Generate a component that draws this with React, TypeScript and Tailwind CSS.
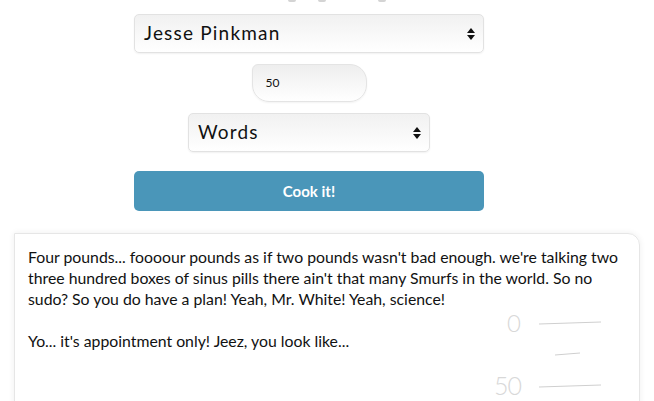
import React from 'react';

const Arrows = () => (
  <svg width="8" height="12" viewBox="0 0 8 12" className="shrink-0">
    <path d="M4 0 L8 5 L0 5 Z" fill="#111" />
    <path d="M0 7 L8 7 L4 12 Z" fill="#111" />
  </svg>
);

const FakeSelect = ({ label, className }: { label: string; className: string }) => (
  <div
    className={`flex items-center justify-between h-[39px] rounded-[5px] border border-[#e2e2e2] bg-gradient-to-b from-[#f1f1f1] to-white shadow-[0_1px_2px_rgba(0,0,0,0.06)] pl-[9px] pr-[8px] ${className}`}
  >
    <span className="text-[19px] text-[#111] tracking-[1.2px]">{label}</span>
    <Arrows />
  </div>
);

export default function App() {
  return (
    <main
      className="relative w-[654px] h-[401px] overflow-hidden bg-white"
      style={{ fontFamily: 'Lato, "Open Sans", sans-serif' }}
    >
      <div className="flex h-[2px] pl-[288px]">
        <span className="w-[8px] h-[2px] rounded-b-full bg-[#d4d4d4]" />
        <span className="w-[8px] h-[2px] rounded-b-full bg-[#d4d4d4] ml-[22px]" />
        <span className="w-[8px] h-[2px] rounded-b-full bg-[#d4d4d4] ml-[52px]" />
      </div>

      <div className="flex flex-col items-center pt-[12px] pr-[36px]">
        <FakeSelect label="Jesse Pinkman" className="w-[350px]" />

        <div className="mt-[11px] w-[115px] h-[38px] flex items-center pl-[13px] border border-[#e4e4e4] rounded-tl-[6px] rounded-tr-[17px] rounded-br-[17px] rounded-bl-[17px] bg-gradient-to-b from-[#eeeeee] to-white shadow-[0_1px_2px_rgba(0,0,0,0.05)]">
          <span className="text-[12px] text-[#111]">50</span>
        </div>

        <FakeSelect label="Words" className="w-[242px] mt-[11px]" />

        <button className="mt-[19px] w-[350px] h-[40px] rounded-[5px] bg-[#4a96b9] text-white font-bold text-[15px]">
          Cook it!
        </button>
      </div>

      <div className="relative mt-[22px] mx-[14px] h-[200px] border border-[#e6e6e6] rounded-tr-[12px] shadow-[0_0_6px_rgba(0,0,0,0.07)] pl-[13px] pr-[18px] pt-[12px]">
        <p className="text-[15.8px] leading-[21px] text-[#111]">
          Four pounds... foooour pounds as if two pounds wasn't bad enough. we're talking two three hundred boxes of sinus pills there ain't that many Smurfs in the world. So no sudo? So you do have a plan! Yeah, Mr. White! Yeah, science!
        </p>
        <p className="text-[15.8px] leading-[21px] text-[#111] mt-[21px]">
          Yo... it's appointment only! Jeez, you look like...
        </p>

        <div className="absolute left-[466px] top-[77px] w-[130px] text-[#d8d8d8]">
          <div className="flex items-center">
            <span className="w-[40px] text-right text-[24px] font-light leading-none">0</span>
            <svg width="64" height="4" className="ml-[18px]">
              <line x1="0" y1="3" x2="62" y2="1" stroke="#cfcfcf" strokeWidth="1" />
            </svg>
          </div>
          <svg width="30" height="4" className="ml-[74px] mt-[17px]">
            <line x1="0" y1="3" x2="25" y2="1" stroke="#cfcfcf" strokeWidth="1" />
          </svg>
          <div className="flex items-center mt-[17px]">
            <span className="w-[40px] text-right text-[25px] font-light leading-none tracking-[-1px]">50</span>
            <svg width="64" height="4" className="ml-[18px]">
              <line x1="0" y1="3" x2="62" y2="1" stroke="#cfcfcf" strokeWidth="1" />
            </svg>
          </div>
        </div>
      </div>
    </main>
  );
}
